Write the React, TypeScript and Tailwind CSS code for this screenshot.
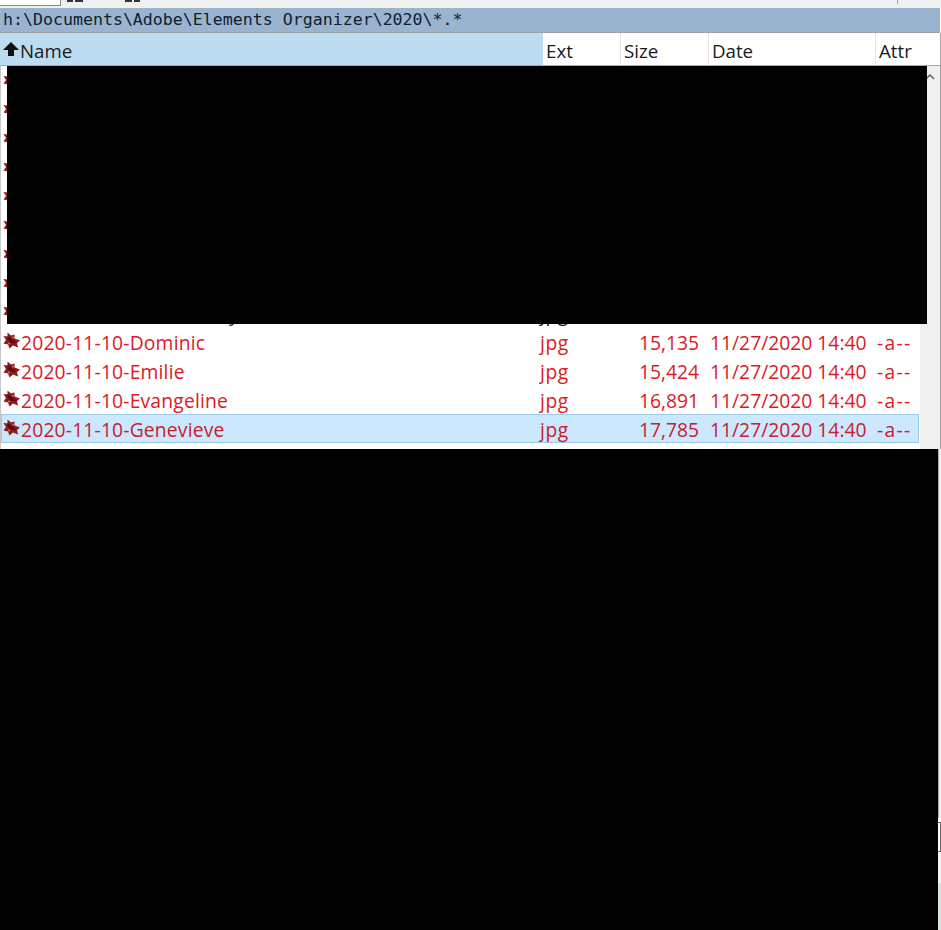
const FONT = "font-['Open_Sans','Noto_Sans',sans-serif]";

interface FileRow {
  name: string;
  size: string;
}

const VISIBLE_ROWS: FileRow[] = [
  { name: "2020-11-10-Dominic", size: "15,135" },
  { name: "2020-11-10-Emilie", size: "15,424" },
  { name: "2020-11-10-Evangeline", size: "16,891" },
  { name: "2020-11-10-Genevieve", size: "17,785" },
];

function FileIcon() {
  return (
    <svg width="18" height="18" viewBox="0 0 18 18" className="shrink-0">
      <path
        d="M4.5 0.5L8 3.5L11.5 2.5L11.5 6.5L17 8.5L14 11L15 15.5L10 13.5L6.5 16.5L5 12.5L0.5 11.5L3 8L0.5 4L4.5 4.5z"
        fill="#8a1a1c"
      />
      <path d="M4 4L9 7L13 11L9 11L5 8z" fill="#5c0a0c" />
      <circle cx="10" cy="5.5" r="1" fill="#c9757a" />
      <circle cx="6" cy="11.5" r="1" fill="#c9757a" />
    </svg>
  );
}

function Row({ row, selected }: { row: FileRow; selected?: boolean }) {
  return (
    <div
      className={`flex h-[29px] w-[918px] items-center text-[19.3px] ${
        selected ? "bg-[#cce8ff] text-[#c8202c] ring-1 ring-inset ring-[#9ccbe8]" : "text-[#dc1a1f]"
      }`}
    >
      <div className="flex w-[539px] items-center pl-[2px]">
        <FileIcon />
        <span className="pt-[2px] tracking-[0.17px]">{row.name}</span>
      </div>
      <span className="w-[60px] pt-[2px] tracking-[0.6px]">jpg</span>
      <span className="w-[99px] pt-[2px] text-right">{row.size}</span>
      <span className="ml-[11px] w-[167px] whitespace-nowrap pt-[2px]">11/27/2020 14:40</span>
      <span className="pt-[2px] tracking-[1.3px]">-a--</span>
    </div>
  );
}

function HiddenRow({ last }: { last?: boolean }) {
  return (
    <div className="flex h-[29px] items-center text-[19.3px] text-[#222]">
      <div className="flex w-[539px] items-center pl-[2px]">
        <FileIcon />
        {last && <span className="ml-[208px] pt-[2px]">y</span>}
      </div>
      {last && <span className="pt-[2px] tracking-[0.6px]">jpg</span>}
    </div>
  );
}

export default function App() {
  return (
    <div className={`${FONT} h-[930px] w-[941px] overflow-hidden bg-white leading-none`}>
      <div className="flex h-[8px] items-start bg-[#f0f0f0]">
        <div className="h-[6px] w-[61px] border-r border-b border-[#8a8a8a] bg-white" />
        <div className="ml-[6px] h-[2px] w-[6px] bg-[#333]" />
        <div className="ml-[2px] h-[2px] w-[8px] bg-[#333]" />
        <div className="ml-[42px] h-[2px] w-[7px] bg-[#333]" />
        <div className="ml-[2px] h-[2px] w-[6px] bg-[#333]" />
        <div className="ml-[757px] h-[4px] w-[1px] bg-[#a0a0a0]" />
      </div>
      <div className="w-[940px] border-b border-[#a0a0a0]">
        <div className="flex h-[24px] items-center bg-[#9ab4d0] pl-[3px] font-['DejaVu_Sans_Mono',monospace] text-[16.6px] text-[#10202e]">
          h:\Documents\Adobe\Elements Organizer\2020\*.*
        </div>
      </div>
      <div className="flex h-[33px] w-[941px] items-center border-r border-b border-[#a8a8a8] bg-white text-[18.7px] text-[#1a1a1a]">
        <div className="flex h-full w-[543px] items-center bg-[#bbdcf1] pl-[3px]">
          <svg width="16" height="16" viewBox="0 0 16 16" className="shrink-0">
            <path d="M8 1L16 9H11V15H5V9H0z" fill="#111" />
          </svg>
          <span className="ml-[1px] pt-[5px]">Name</span>
        </div>
        <div className="flex h-full w-[78px] items-center border-r border-[#e5e5e5] pl-[3px] pt-[5px]">Ext</div>
        <div className="flex h-full w-[88px] items-center border-r border-[#e5e5e5] pl-[3px] pt-[5px]">Size</div>
        <div className="flex h-full w-[167px] items-center border-r border-[#e5e5e5] pl-[3px] pt-[5px]">Date</div>
        <div className="flex h-full items-center pl-[3px] pt-[5px]">Attr</div>
      </div>
      <div className="relative flex h-[383px] w-[941px] border-r border-[#a0a0a0]">
        <div className="h-full w-[920px] border-l border-[#c8c8c8]">
          {Array.from({ length: 9 }).map((_, i) => (
            <HiddenRow key={i} last={i === 8} />
          ))}
          {VISIBLE_ROWS.map((row, i) => (
            <Row key={row.name} row={row} selected={i === VISIBLE_ROWS.length - 1} />
          ))}
        </div>
        <div className="flex w-[20px] justify-center bg-[#f0f0f0] pt-[8px]">
          <svg width="10" height="6" viewBox="0 0 10 6">
            <path d="M1 5l4-4 4 4" fill="none" stroke="#606060" strokeWidth="1.5" />
          </svg>
        </div>
        {/* redacted block over the top of the list */}
        <div className="absolute left-[7px] top-0 h-[258px] w-[920px] bg-black" />
      </div>
      <div className="flex h-[481px]">
        <div className="h-full w-[938px] bg-black" />
        <div className="flex h-full w-[3px] flex-col">
          <div className="h-[369px] border-l border-[#b0b0b0] bg-[#f0f0f0]" />
          <div className="h-[4px] bg-white" />
          <div className="h-[30px] border-y border-r border-[#666] bg-white" />
          <div className="h-[31px] bg-[#f4f4f4]" />
          <div className="flex-1 bg-[#d6e4e0]" />
        </div>
      </div>
    </div>
  );
}
